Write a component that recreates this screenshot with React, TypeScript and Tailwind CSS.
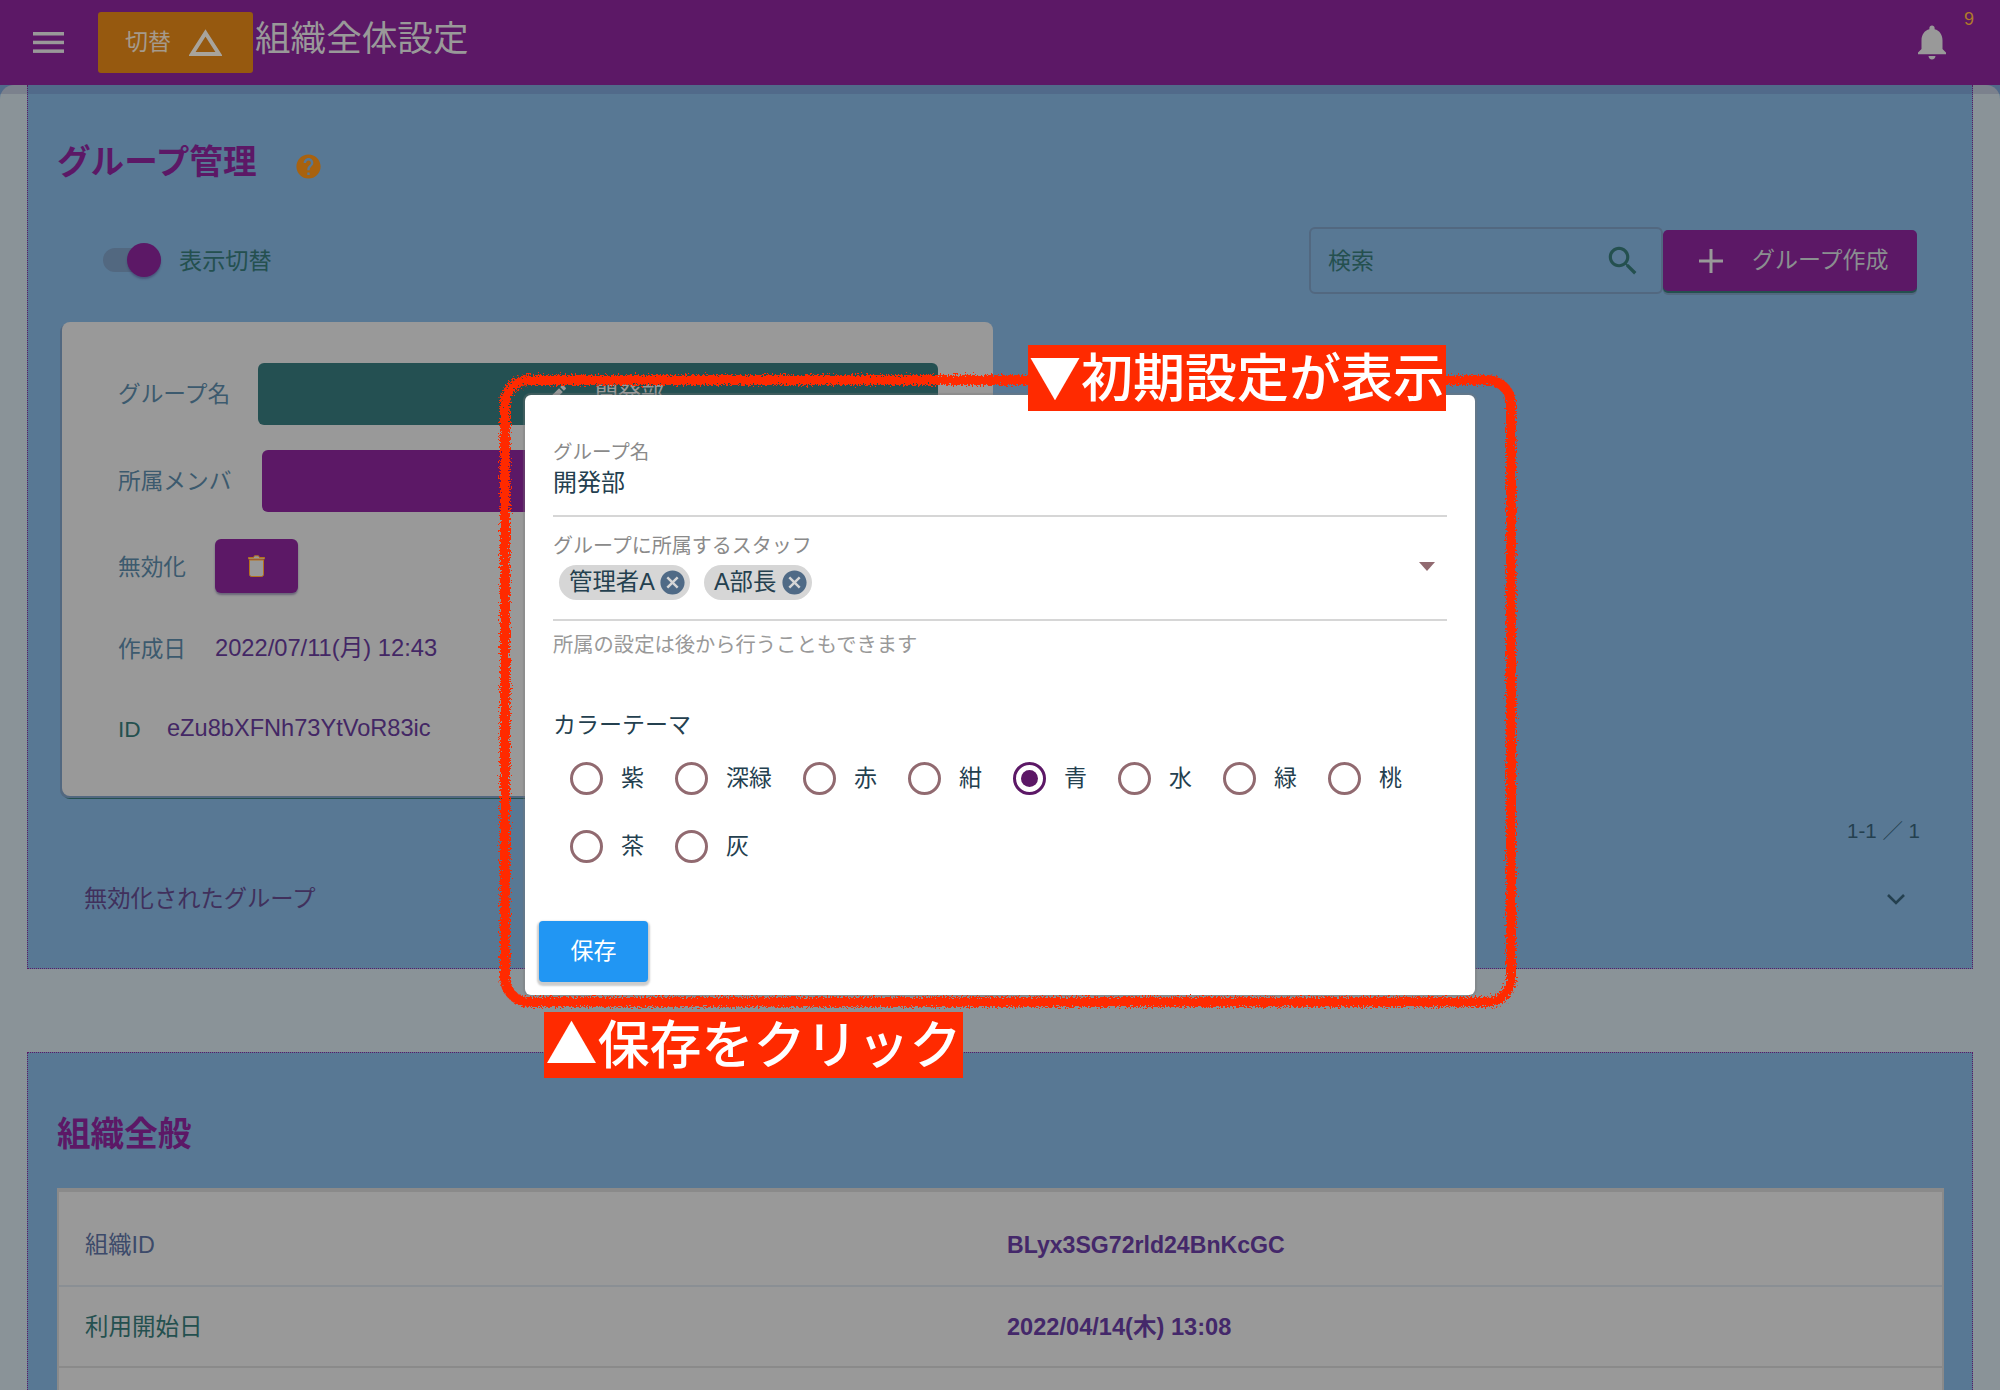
import React from "react";

const Mi = ({ d, className, fill = "currentColor" }: { d: string; className?: string; fill?: string }) => (
  <svg viewBox="0 0 24 24" className={className} fill={fill}>
    <path d={d} />
  </svg>
);

const P = {
  search: "M15.5 14h-.79l-.28-.27C15.41 12.59 16 11.11 16 9.5 16 5.91 13.09 3 9.5 3S3 5.91 3 9.5 5.91 16 9.5 16c1.61 0 3.09-.59 4.23-1.57l.27.28v.79l5 4.99L20.49 19l-4.99-5zm-6 0C7.01 14 5 11.99 5 9.5S7.01 5 9.5 5 14 7.01 14 9.5 11.99 14 9.5 14z",
  bell: "M12 22c1.1 0 2-.9 2-2h-4c0 1.1.89 2 2 2zm6-6v-5c0-3.07-1.64-5.64-4.5-6.32V4c0-.83-.67-1.5-1.5-1.5s-1.5.67-1.5 1.5v.68C7.63 5.36 6 7.92 6 11v5l-2 2v1h16v-1l-2-2z",
  help: "M12 2C6.48 2 2 6.48 2 12s4.48 10 10 10 10-4.48 10-10S17.52 2 12 2zm1 17h-2v-2h2v2zm2.07-7.75l-.9.92C13.45 12.9 13 13.5 13 15h-2v-.5c0-1.1.45-2.1 1.17-2.83l1.24-1.26c.37-.36.59-.86.59-1.41 0-1.1-.9-2-2-2s-2 .9-2 2H8c0-2.21 1.79-4 4-4s4 1.79 4 4c0 .88-.36 1.68-.93 2.25z",
  cancel: "M12 2C6.47 2 2 6.47 2 12s4.47 10 10 10 10-4.47 10-10S17.53 2 12 2zm5 13.59L15.59 17 12 13.41 8.41 17 7 15.59 10.59 12 7 8.41 8.41 7 12 10.59 15.59 7 17 8.41 13.41 12 17 15.59z",
  edit: "M3 17.25V21h3.75L17.81 9.94l-3.75-3.75L3 17.25zM20.71 7.04c.39-.39.39-1.02 0-1.41l-2.34-2.34c-.39-.39-1.02-.39-1.41 0l-1.83 1.83 3.75 3.75 1.83-1.83z",
};

const colors: [string, boolean][] = [
  ["紫", false], ["深緑", false], ["赤", false], ["紺", false], ["青", true],
  ["水", false], ["緑", false], ["桃", false], ["茶", false], ["灰", false],
];

function Chip({ label, w }: { label: string; w: string }) {
  return (
    <div className={`flex h-[35px] items-center rounded-full bg-[#d6d6d6] pl-[10px] pr-[3px] ${w}`}>
      <span className="flex-1 whitespace-nowrap text-[23.4px] leading-none text-[#24404f]">{label}</span>
      <Mi d={P.cancel} className="h-[29px] w-[29px] text-[#4f6a86]" />
    </div>
  );
}

export default function App() {
  return (
    <div className="relative h-[1390px] w-[2000px] overflow-hidden bg-[#587894] font-['Liberation_Sans','Noto_Sans_CJK_JP',sans-serif] text-[22.7px]">
      <header className="relative z-10 flex h-[85px] items-center bg-[#5c1866] shadow-[0_9px_0_rgba(50,40,90,0.16)]">
        <svg viewBox="0 0 31 21" className="ml-[33px] h-[21px] w-[31px]" fill="#999">
          <rect y="0" width="31" height="3.5" />
          <rect y="8.7" width="31" height="3.5" />
          <rect y="17.4" width="31" height="3.5" />
        </svg>
        <div className="ml-[34px] flex h-[61px] w-[155px] items-center rounded-[3px] bg-[#96590f] pl-[27px]">
          <span className="text-[23px] text-[#a59a8c]">切替</span>
          <svg viewBox="0 0 33 27" className="ml-[18px] h-[27px] w-[33px]" fill="none" stroke="#a8a49c" strokeWidth="4">
            <path d="M16.5 4 L30 25 H3 Z" />
          </svg>
        </div>
        <h1 className="ml-[2px] -mt-[6px] text-[35.6px] font-normal leading-none text-[#999]">組織全体設定</h1>
        <div className="relative ml-auto mr-[49px] -mt-[3px] h-[40px] w-[40px]">
          <Mi d={P.bell} className="h-[42px] w-[42px] text-[#999]" />
          <span className="absolute left-[53px] top-[-15px] text-[18px] leading-[26px] text-[#b07a2a]">9</span>
        </div>
      </header>

      <main className="h-[1305px] rounded-t-[14px] bg-[#8a9398] px-[27px]">
        <section className="h-[884px] border-x border-b border-dotted border-[#5c1866] bg-[#587894] pl-[29px] pt-[58px]">
          <div className="flex h-[40px] items-center">
            <h2 className="w-[200px] whitespace-nowrap text-[33.6px] font-bold leading-none text-[#5c1866]">グループ管理</h2>
            <Mi d={P.help} className="ml-[37px] mt-[6px] h-[29px] w-[29px] text-[#a8620f]" />
          </div>

          <div className="mt-[44px] flex h-[67px] items-center pr-[55px]">
            <div className="ml-[46px] flex items-center">
              <div className="relative h-[24px] w-[58px] rounded-full bg-[#526880]">
                <div className="absolute right-0 top-[-5px] h-[34px] w-[34px] rounded-full bg-[#5c1866] shadow-[0_2px_2px_rgba(50,40,90,0.4)]" />
              </div>
              <span className="ml-[18px] mt-[1px] text-[23.2px] text-[#24504f]">表示切替</span>
            </div>
            <div className="ml-auto flex h-[67px] w-[354px] items-center justify-between rounded-[6px] border-2 border-[#526880] pl-[17px] pr-[19px]">
              <span className="mt-[1px] text-[23px] text-[#24504f]">検索</span>
              <Mi d={P.search} className="h-[38px] w-[38px] text-[#24504f]" />
            </div>
            <button className="flex h-[61px] w-[254px] items-center rounded-[5px] bg-[#5c1866] pl-[36px] shadow-[0_2px_0_#24504f,0_4px_0_#526880]">
              <svg viewBox="0 0 24 24" className="h-[24px] w-[24px]" fill="#999">
                <rect x="10.5" width="3" height="24" />
                <rect y="10.5" width="24" height="3" />
              </svg>
              <span className="ml-[29px] text-[23px] text-[#8a8f90]">グループ作成</span>
            </button>
          </div>

          <div className="ml-[5px] mt-[28px] h-[474px] w-[931px] rounded-[8px] bg-[#999] pl-[56px] pt-[41px] shadow-[-2px_2px_0_#526880,0_3px_0_#24504f]">
            <div className="flex h-[62px] items-center">
              <span className="w-[140px] text-[#3c5a6e]">グループ名</span>
              <div className="flex h-[62px] w-[680px] items-center rounded-[6px] bg-[#245052] pl-[287px]">
                <Mi d={P.edit} className="h-[24px] w-[24px] text-[#999]" />
                <span className="ml-[26px] mt-[2px] text-[23px] text-[#999]">開発部</span>
              </div>
            </div>
            <div className="mt-[25px] flex h-[62px] items-center">
              <span className="w-[144px] text-[#3c5a6e]">所属メンバ</span>
              <div className="h-[62px] w-[676px] rounded-[6px] bg-[#5c1866]" />
            </div>
            <div className="mt-[27px] flex h-[54px] items-center">
              <span className="mt-[2px] w-[97px] text-[#3c5a6e]">無効化</span>
              <div className="flex h-[54px] w-[83px] items-center justify-center rounded-[6px] bg-[#5c1866] shadow-[0_2px_2px_rgba(60,50,90,0.5)]">
                <svg viewBox="0 0 17 22" className="h-[22px] w-[17px]" fill="#999" stroke="#b5721c" strokeWidth="1">
                  <path d="M1.5 5 H15.5 V19.5 Q15.5 21.5 13.5 21.5 H3.5 Q1.5 21.5 1.5 19.5 Z" />
                  <path d="M0.5 2.5 H5.5 L6.5 0.8 H10.5 L11.5 2.5 H16.5 V4 H0.5 Z" />
                </svg>
              </div>
            </div>
            <div className="mt-[36px] flex h-[40px] items-center">
              <span className="w-[97px] text-[#3c5a6e]">作成日</span>
              <span className="text-[23.7px] text-[#432765]">2022/07/11(月) 12:43</span>
            </div>
            <div className="mt-[40px] flex h-[40px] items-center">
              <span className="w-[49px] text-[#24504f]">ID</span>
              <span className="text-[23.6px] text-[#432765]">eZu8bXFNh73YtVoR83ic</span>
            </div>
          </div>

          <div className="mt-[20px] flex h-[30px] items-center justify-end pr-[52px] text-[20.5px] text-[#24404f]">1-1 ／ 1</div>

          <div className="mt-[33px] flex h-[40px] items-center pl-[27px] pr-[66px]">
            <span className="text-[23.3px] text-[#40305c]">無効化されたグループ</span>
            <svg viewBox="0 0 20 12" className="ml-auto h-[12px] w-[20px]" fill="none" stroke="#24404f" strokeWidth="2.6">
              <path d="M2 2 L10 10 L18 2" />
            </svg>
          </div>
        </section>

        <section className="mt-[83px] h-[400px] border-x border-t border-dotted border-[#5c1866] bg-[#587894] pl-[29px] pt-[62px]">
          <h2 className="h-[40px] text-[33.6px] font-bold leading-[40px] text-[#5c1866]">組織全般</h2>
          <div className="mt-[33px] w-[1887px] border-x-2 border-t-4 border-[#8a8a8a] bg-[#999]">
            <div className="flex h-[95px] items-center border-b-2 border-[#8a8f94] pl-[26px] pt-[13px]">
              <span className="w-[922px] text-[23.3px] text-[#3c4a6a]">組織ID</span>
              <span className="text-[23.1px] font-bold text-[#44286a]">BLyx3SG72rld24BnKcGC</span>
            </div>
            <div className="flex h-[81px] items-center border-b-2 border-[#8a8a8a] pl-[26px] pt-[2px]">
              <span className="w-[922px] text-[23.5px] text-[#24504f]">利用開始日</span>
              <span className="text-[23.6px] font-bold text-[#44286a]">2022/04/14(木) 13:08</span>
            </div>
            <div className="h-[90px]" />
          </div>
        </section>
      </main>

      {/* dialog */}
      <div className="absolute left-[525px] top-[395px] z-20 h-[600px] w-[950px] rounded-[6px] bg-white pl-[28px] pr-[28px] pt-[45px] shadow-[0_0_1px_2px_rgba(120,120,120,0.35)]">
        <div className="mt-[3px] h-[19px] text-[19.5px] leading-[19px] text-[#8a8a8a]">グループ名</div>
        <div className="mt-[4px] h-[34px] text-[24px] leading-[34px] text-[#24404f]">開発部</div>
        <div className="mt-[15px] h-[2px] bg-[#d6d6d6]" />
        <div className="mt-[17px] h-[24px] text-[20px] leading-[24px] text-[#8a8a8a]">グループに所属するスタッフ</div>
        <div className="mt-[7px] flex h-[35px] items-center pl-[6px]">
          <Chip label="管理者A" w="w-[131px]" />
          <div className="w-[14px]" />
          <Chip label="A部長" w="w-[108px]" />
          <svg viewBox="0 0 16 9" className="ml-auto mr-[12px] mt-[-32px] h-[9px] w-[16px]" fill="#916a70">
            <path d="M0 0 H16 L8 9 Z" />
          </svg>
        </div>
        <div className="mt-[19px] h-[2px] bg-[#d6d6d6]" />
        <div className="mt-[12px] h-[24px] whitespace-nowrap text-[20.3px] leading-[24px] text-[#999]">所属の設定は後から行うこともできます</div>
        <div className="mt-[52px] h-[32px] text-[23px] leading-[32px] text-[#24404f]">カラーテーマ</div>
        <div className="mt-[3px] flex w-[890px] flex-wrap pl-[17px]">
          {colors.map(([name, on]) => (
            <label key={name} className="flex h-[68px] items-center pr-[31px]">
              <span className={`flex h-[33px] w-[33px] items-center justify-center rounded-full border-[3px] ${on ? "border-[#5c1866]" : "border-[#916a70]"}`}>
                {on && <span className="h-[17px] w-[17px] rounded-full bg-[#5c1866]" />}
              </span>
              <span className="ml-[18px] text-[23px] text-[#24404f]">{name}</span>
            </label>
          ))}
        </div>
        <button className="-ml-[14px] mt-[41px] h-[61px] w-[109px] rounded-[4px] bg-[#2196f3] text-[23px] text-white shadow-[0_2px_2px_2px_rgba(0,0,0,0.2)]">保存</button>
      </div>

      {/* annotation */}
      <svg className="absolute left-0 top-0 z-30 h-[1390px] w-[2000px]" viewBox="0 0 2000 1390" fill="none">
        <defs>
          <filter id="rough" x="-5%" y="-5%" width="110%" height="110%">
            <feTurbulence type="fractalNoise" baseFrequency="0.6" numOctaves="2" seed="4" />
            <feDisplacementMap in="SourceGraphic" scale="9" />
          </filter>
        </defs>
        <rect x="505" y="380" width="1006" height="622" rx="24" stroke="#ff2a00" strokeWidth="10" filter="url(#rough)" />
      </svg>
      <div className="absolute left-[1028px] top-[345px] z-40 flex h-[66px] w-[418px] items-center justify-center whitespace-nowrap bg-[#ff2a00] pb-[6px] font-['Noto_Sans_CJK_JP',sans-serif] text-[52px] font-medium leading-none text-white">▼初期設定が表示</div>
      <div className="absolute left-[544px] top-[1012px] z-40 flex h-[66px] w-[419px] items-center justify-center whitespace-nowrap bg-[#ff2a00] pb-[6px] font-['Noto_Sans_CJK_JP',sans-serif] text-[52px] font-medium leading-none text-white">▲保存をクリック</div>
    </div>
  );
}
